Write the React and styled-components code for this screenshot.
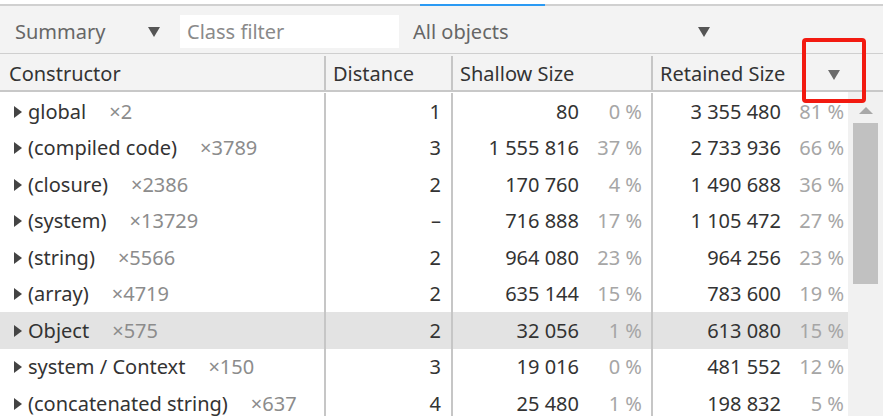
import React from "react";
import styled, { createGlobalStyle } from "styled-components";

const Global = createGlobalStyle`
  html, body { margin: 0; padding: 0; background: #fff; overflow: hidden; }
  body { font-family: "Noto Sans", "Open Sans", sans-serif; color: #333; }
`;

const COLS = "326px 127px 200px 195px";

const Frame = styled.div`
  width: 883px;
  height: 416px;
  position: relative;
  overflow: hidden;
  padding-top: 4px;
  box-sizing: border-box;
  background: #fff;
`;

const TabLine = styled.div`
  height: 2px;
  background: #d0d0d0;
  display: flex;
`;

const TabIndicator = styled.div`
  margin-left: 420px;
  width: 125px;
  background: #2b9af3;
`;

const Toolbar = styled.div`
  height: 48px;
  padding-top: 4px;
  box-sizing: border-box;
  background: #f3f3f3;
  display: flex;
  align-items: center;
  font-size: 20px;
  color: #666;
  border-bottom: 1px solid #cfcfcf;
`;

const Select = styled.div`
  display: flex;
  align-items: center;
  width: ${(p) => p.$w}px;
  padding-left: ${(p) => p.$pl}px;
  box-sizing: border-box;
  justify-content: space-between;
  padding-right: ${(p) => p.$pr}px;
`;

const Caret = styled.span`
  width: 0;
  height: 0;
  border-left: 6px solid transparent;
  border-right: 6px solid transparent;
  border-top: 10px solid #555;
  margin-top: 1px;
`;

const Filter = styled.div`
  width: 219px;
  height: 33px;
  background: #fff;
  display: flex;
  align-items: center;
  padding-left: 7px;
  box-sizing: border-box;
  color: #8a8a8a;
  margin-right: 14px;
`;

const HeaderRow = styled.div`
  display: grid;
  grid-template-columns: ${COLS} 1fr;
  height: 38px;
  padding-top: 2px;
  box-sizing: border-box;
  background: #f3f3f3;
  border-bottom: 2px solid #c8c8c8;
  font-size: 20px;
  color: #333;
`;

const HeaderCell = styled.div`
  display: flex;
  align-items: center;
  justify-content: space-between;
  padding-left: ${(p) => p.$pl ?? 7}px;
  padding-right: 14px;
  border-right: ${(p) => (p.$last ? "none" : "2px solid #c6c6c6")};
`;

const SortCaret = styled(Caret)`
  border-top-color: #6a6a6a;
  margin-right: -6px;
  margin-top: 4px;
`;

const Body = styled.div`
  display: flex;
  height: 330px;
`;

const Rows = styled.div`
  width: 848px;
  padding-top: 1px;
`;

const Row = styled.div`
  display: grid;
  grid-template-columns: ${COLS};
  height: 36.5px;
  background: ${(p) => (p.$selected ? "#e3e3e3" : "#fff")};
  font-size: 20px;
  color: #333;
`;

const Cell = styled.div`
  display: flex;
  align-items: center;
  justify-content: ${(p) => (p.$left ? "flex-start" : "flex-end")};
  padding-left: ${(p) => (p.$left ? 14 : 0)}px;
  padding-right: ${(p) => p.$pr ?? 0}px;
  border-right: ${(p) => (p.$last ? "none" : "2px solid #c6c6c6")};
  white-space: nowrap;
  overflow: hidden;
`;

const Arrow = styled.span`
  width: 0;
  height: 0;
  border-top: 6px solid transparent;
  border-bottom: 6px solid transparent;
  border-left: 8px solid #444;
  margin-right: 6px;
  margin-top: 1px;
`;

const Count = styled.span`
  color: #8c8c8c;
  margin-left: 23px;
`;

const Num = styled.span`
  text-align: right;
`;

const Pct = styled.span`
  color: #a6a6a6;
  width: 63px;
  text-align: right;
`;

const Scrollbar = styled.div`
  width: 35px;
  background: #f1f1f1;
  display: flex;
  flex-direction: column;
  align-items: center;
  padding-top: 15px;
  box-sizing: border-box;
`;

const ScrollUp = styled.span`
  width: 0;
  height: 0;
  border-left: 7px solid transparent;
  border-right: 7px solid transparent;
  border-bottom: 7px solid #a8a8a8;
`;

const Thumb = styled.div`
  width: 25px;
  height: 161px;
  background: #c1c1c1;
  margin-top: 9px;
`;

const Highlight = styled.div`
  position: absolute;
  left: 802px;
  top: 38px;
  width: 64px;
  height: 65px;
  border: 4px solid #f21a10;
  border-radius: 4px;
  box-sizing: border-box;
`;

const data = [
  ["global", "×2", "1", "80", "0 %", "3 355 480", "81 %"],
  ["(compiled code)", "×3789", "3", "1 555 816", "37 %", "2 733 936", "66 %"],
  ["(closure)", "×2386", "2", "170 760", "4 %", "1 490 688", "36 %"],
  ["(system)", "×13729", "–", "716 888", "17 %", "1 105 472", "27 %"],
  ["(string)", "×5566", "2", "964 080", "23 %", "964 256", "23 %"],
  ["(array)", "×4719", "2", "635 144", "15 %", "783 600", "19 %"],
  ["Object", "×575", "2", "32 056", "1 %", "613 080", "15 %"],
  ["system / Context", "×150", "3", "19 016", "0 %", "481 552", "12 %"],
  ["(concatenated string)", "×637", "4", "25 480", "1 %", "198 832", "5 %"],
];

export default function App() {
  return (
    <>
      <Global />
      <Frame>
        <TabLine>
          <TabIndicator />
        </TabLine>
        <Toolbar>
          <Select $w={180} $pl={15} $pr={20}>
            <span>Summary</span>
            <Caret />
          </Select>
          <Filter>Class filter</Filter>
          <Select $w={304} $pl={0} $pr={7}>
            <span>All objects</span>
            <Caret />
          </Select>
        </Toolbar>
        <HeaderRow>
          <HeaderCell $pl={9}>Constructor</HeaderCell>
          <HeaderCell>Distance</HeaderCell>
          <HeaderCell>Shallow Size</HeaderCell>
          <HeaderCell $last>
            <span>Retained Size</span>
            <SortCaret />
          </HeaderCell>
        </HeaderRow>
        <Body>
          <Rows>
            {data.map((r, i) => (
              <Row key={i} $selected={r[0] === "Object"}>
                <Cell $left>
                  <Arrow />
                  <span>{r[0]}</span>
                  <Count>{r[1]}</Count>
                </Cell>
                <Cell $pr={10}>{r[2]}</Cell>
                <Cell $pr={9}>
                  <Num>{r[3]}</Num>
                  <Pct>{r[4]}</Pct>
                </Cell>
                <Cell $last $pr={4}>
                  <Num>{r[5]}</Num>
                  <Pct>{r[6]}</Pct>
                </Cell>
              </Row>
            ))}
          </Rows>
          <Scrollbar>
            <ScrollUp />
            <Thumb />
          </Scrollbar>
        </Body>
        <Highlight />
      </Frame>
    </>
  );
}
